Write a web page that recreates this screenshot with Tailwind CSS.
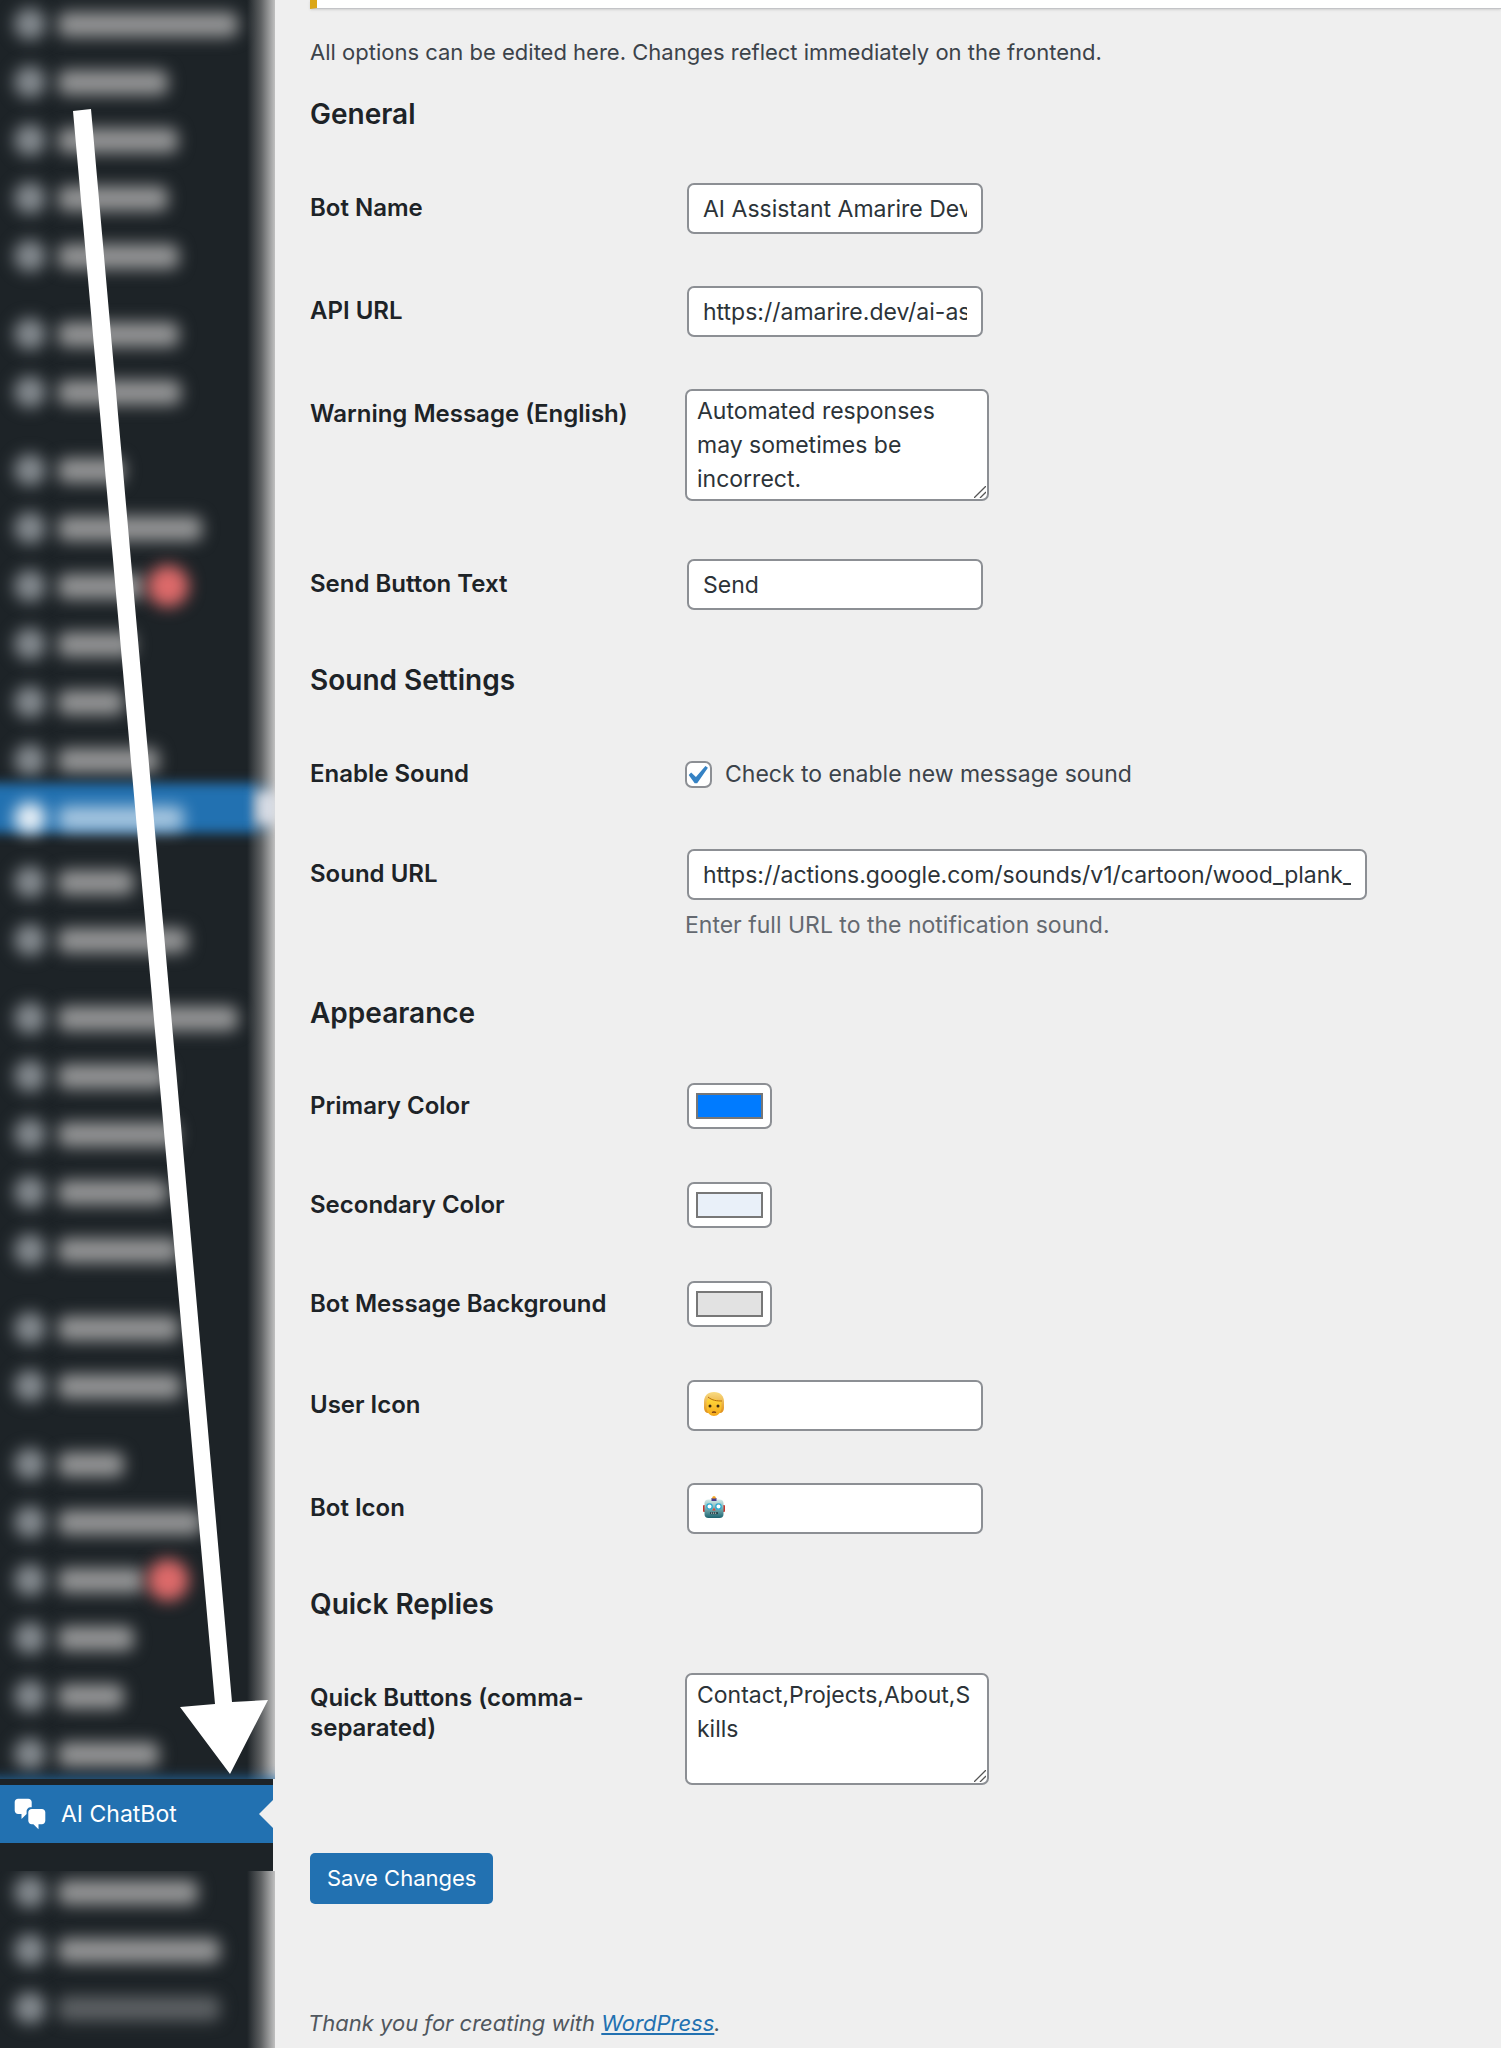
<!DOCTYPE html>
<html lang="en">
<head>
<meta charset="utf-8">
<title>AI ChatBot Settings</title>
<script src="https://cdn.jsdelivr.net/npm/@tailwindcss/browser@4"></script>
</head>
<body class="bg-[#efefef] font-['Inter','Liberation_Sans',sans-serif] text-[22px] text-[#3c434a]">
<div class="relative flex min-h-screen items-stretch">

  <!-- Admin menu -->
  <aside class="relative flex w-[275px] shrink-0 flex-col">
    <div class="relative h-[1779px] overflow-hidden bg-[#1d2327]">
      <ul id="menu-top" aria-hidden="true"></ul>
      <div class="absolute inset-y-0 right-0 w-[28px] bg-linear-to-r from-[#1d2327]/0 via-[#8c8c8c]/60 to-[#c0c0c0]"></div>
      <div class="absolute top-[792px] -right-1 h-8 w-6 bg-[#e8ebf2]/80 blur-[6px]"></div>
      <div class="absolute -inset-x-5 top-[1779px] h-4 bg-[#2271b1] blur-[7px]"></div>
    </div>
    <nav class="relative mr-0.5 bg-[#1d2327] pt-1.5 pb-7">
      <a href="#" class="relative flex h-[58px] items-center bg-[#2271b1] pl-[13px] text-[23px] text-white">
        <svg class="mr-[14px] size-[34px]" viewBox="0 0 20 20" fill="currentColor"><path d="M11 6h-.82C9.07 6 8 7.2 8 8.16V10l-3 3v-3H3c-1.1 0-2-.9-2-2V3c0-1.1.9-2 2-2h6c1.1 0 2 .9 2 2v3zm0 1h6c1.1 0 2 .9 2 2v5c0 1.1-.9 2-2 2h-2v3l-3-3h-1c-1.1 0-2-.9-2-2V9c0-1.1.9-2 2-2z"/></svg>
        AI ChatBot
        <svg class="absolute top-[15px] right-0 h-7 w-3.5" viewBox="0 0 14 28" fill="#efefef"><path d="M14 0v28L0 14z"/></svg>
      </a>
    </nav>
    <div class="relative grow overflow-hidden bg-[#1d2327]">
      <ul id="menu-bottom" aria-hidden="true"></ul>
      <div class="absolute inset-y-0 right-0 w-[28px] bg-linear-to-r from-[#1d2327]/0 via-[#8c8c8c]/60 to-[#c0c0c0]"></div>
    </div>
  </aside>

  <!-- Settings page -->
  <main class="min-w-0 grow pl-[35px]">
    <div class="h-[9px] border-b border-l-[7px] border-b-[#c3c4c7] border-l-[#dba617] bg-white shadow-sm"></div>
    <p class="mt-[27px] leading-[33px]">All options can be edited here. Changes reflect immediately on the frontend.</p>

    <form>
      <h2 class="mt-[29px] mb-[53px] text-[28px] leading-8 font-semibold text-[#1d2327]">General</h2>
      <div class="flex flex-col gap-[52px]">
        <div class="flex items-start">
          <label for="bot-name" class="w-[375px] shrink-0 pt-2.5 text-[24px] leading-[30px] font-semibold text-[#1d2327]">Bot Name</label>
          <input id="bot-name" type="text" value="AI Assistant Amarire Dev" class="ml-0.5 h-[51px] w-[296px] rounded-[7px] border-2 border-[#8c8f94] bg-white px-3.5 text-[23px] text-[#2c3338]">
        </div>
        <div class="flex items-start">
          <label for="api-url" class="w-[375px] shrink-0 pt-2.5 text-[24px] leading-[30px] font-semibold text-[#1d2327]">API URL</label>
          <input id="api-url" type="text" value="https://amarire.dev/ai-assistant" class="ml-0.5 h-[51px] w-[296px] rounded-[7px] border-2 border-[#8c8f94] bg-white px-3.5 text-[23px] text-[#2c3338]">
        </div>
        <div class="flex items-start">
          <label for="warning" class="w-[375px] shrink-0 pt-2.5 text-[24px] leading-[30px] font-semibold text-[#1d2327]">Warning Message (English)</label>
          <div class="relative mb-1.5">
            <textarea id="warning" class="block h-[112px] w-[304px] resize-none overflow-hidden rounded-[7px] border-2 border-[#8c8f94] bg-white px-2.5 py-[3px] text-[23px] leading-[34px] text-[#2c3338]">Automated responses may sometimes be incorrect.</textarea>
            <svg class="absolute right-[3px] bottom-[3px] size-3" viewBox="0 0 12 12" stroke="#555" stroke-width="1.3"><path d="M0 12L12 0M6 12l6-6"/></svg>
          </div>
        </div>
        <div class="flex items-start">
          <label for="send-text" class="w-[375px] shrink-0 pt-2.5 text-[24px] leading-[30px] font-semibold text-[#1d2327]">Send Button Text</label>
          <input id="send-text" type="text" value="Send" class="ml-0.5 h-[51px] w-[296px] rounded-[7px] border-2 border-[#8c8f94] bg-white px-3.5 text-[23px] text-[#2c3338]">
        </div>
      </div>

      <h2 class="mt-[54px] mb-[53px] text-[28px] leading-8 font-semibold text-[#1d2327]">Sound Settings</h2>
      <div class="flex flex-col gap-[52px]">
        <div class="flex min-h-12 items-start">
          <span class="w-[375px] shrink-0 pt-2.5 text-[24px] leading-[30px] font-semibold text-[#1d2327]">Enable Sound</span>
          <label class="flex pt-2.5 text-[23px] leading-[30px]">
            <span class="relative mt-0.5 mr-[13px] size-[27px]">
              <input type="checkbox" checked class="block size-[27px] appearance-none rounded-[7px] border-2 border-[#8c8f94] bg-white">
              <svg class="pointer-events-none absolute -top-1 -left-[7px] size-[37px] max-w-none" viewBox="0 0 20 20" fill="#3582c4"><path d="M14.83 4.89l1.34.94-5.81 8.38H9.02L5.78 9.67l1.34-1.25 2.57 2.4z"/></svg>
            </span>
            Check to enable new message sound
          </label>
        </div>
        <div class="flex items-start">
          <label for="sound-url" class="w-[375px] shrink-0 pt-2.5 text-[24px] leading-[30px] font-semibold text-[#1d2327]">Sound URL</label>
          <div>
            <input id="sound-url" type="text" value="https://actions.google.com/sounds/v1/cartoon/wood_plank_flicks.ogg" class="ml-0.5 block h-[51px] w-[680px] rounded-[7px] border-2 border-[#8c8f94] bg-white px-3.5 text-[23px] text-[#2c3338]">
            <p class="mt-[9px] text-[23px] leading-[33px] text-[#646970]">Enter full URL to the notification sound.</p>
          </div>
        </div>
      </div>

      <h2 class="mt-[55px] mb-[54px] text-[28px] leading-8 font-semibold text-[#1d2327]">Appearance</h2>
      <div class="flex flex-col gap-[52px]">
        <div class="flex min-h-[47px] items-start">
          <label for="primary" class="w-[375px] shrink-0 pt-2 text-[24px] leading-[30px] font-semibold text-[#1d2327]">Primary Color</label>
          <input id="primary" type="color" value="#007bff" class="ml-0.5 h-[46px] w-[85px] appearance-none rounded-[7px] border-2 border-[#8c8f94] bg-white px-[7px] py-2 [&::-webkit-color-swatch]:rounded-none [&::-webkit-color-swatch]:border-2 [&::-webkit-color-swatch]:border-[#777] [&::-webkit-color-swatch-wrapper]:p-0">
        </div>
        <div class="flex min-h-[47px] items-start">
          <label for="secondary" class="w-[375px] shrink-0 pt-2 text-[24px] leading-[30px] font-semibold text-[#1d2327]">Secondary Color</label>
          <input id="secondary" type="color" value="#e9f0f9" class="ml-0.5 h-[46px] w-[85px] appearance-none rounded-[7px] border-2 border-[#8c8f94] bg-white px-[7px] py-2 [&::-webkit-color-swatch]:rounded-none [&::-webkit-color-swatch]:border-2 [&::-webkit-color-swatch]:border-[#777] [&::-webkit-color-swatch-wrapper]:p-0">
        </div>
        <div class="flex min-h-[47px] items-start">
          <label for="bot-bg" class="w-[375px] shrink-0 pt-2 text-[24px] leading-[30px] font-semibold text-[#1d2327]">Bot Message Background</label>
          <input id="bot-bg" type="color" value="#e2e2e2" class="ml-0.5 h-[46px] w-[85px] appearance-none rounded-[7px] border-2 border-[#8c8f94] bg-white px-[7px] py-2 [&::-webkit-color-swatch]:rounded-none [&::-webkit-color-swatch]:border-2 [&::-webkit-color-swatch]:border-[#777] [&::-webkit-color-swatch-wrapper]:p-0">
        </div>
        <div class="flex items-start">
          <label for="user-icon" class="w-[375px] shrink-0 pt-2.5 text-[24px] leading-[30px] font-semibold text-[#1d2327]">User Icon</label>
          <div class="relative ml-0.5">
            <input id="user-icon" type="text" class="block h-[51px] w-[296px] rounded-[7px] border-2 border-[#8c8f94] bg-white px-3.5 text-[23px] text-[#2c3338]">
            <svg class="pointer-events-none absolute top-3 left-4 h-6 w-[22px]" viewBox="0 0 22 24">
              <defs><linearGradient id="face" x1="0" y1="0" x2="0" y2="1"><stop offset="0" stop-color="#ffd93b"/><stop offset="1" stop-color="#f5a81c"/></linearGradient><linearGradient id="hair" x1="0" y1="0" x2="0" y2="1"><stop offset="0" stop-color="#f9dc82"/><stop offset="1" stop-color="#e0901a"/></linearGradient></defs>
              <path d="M11 0C4.500 0 1 4 1 10v6c0 3 2 5 4 5h12c2 0 4-2 4-5v-6C21 4 17.500 0 11 0z" fill="url(#hair)"/>
              <path d="M3.500 10c0-2 1.500-3 3.500-3.500 4 0 8 2 11.500 2v7c0 5-4 8.500-7.500 8.500s-7.500-3.500-7.500-8.500z" fill="url(#face)"/>
              <path d="M5 5c4 3.500 9 4 14 4" fill="none" stroke="#b56a10" stroke-width="1"/>
              <circle cx="7" cy="14" r="1.500" fill="#3b2a12"/><circle cx="15" cy="14" r="1.500" fill="#3b2a12"/>
              <path d="M9 20.500q2-1 4 0" fill="none" stroke="#7a3c10" stroke-width="1.300"/>
            </svg>
          </div>
        </div>
        <div class="flex items-start">
          <label for="bot-icon" class="w-[375px] shrink-0 pt-2.5 text-[24px] leading-[30px] font-semibold text-[#1d2327]">Bot Icon</label>
          <div class="relative ml-0.5">
            <input id="bot-icon" type="text" class="block h-[51px] w-[296px] rounded-[7px] border-2 border-[#8c8f94] bg-white px-3.5 text-[23px] text-[#2c3338]">
            <svg class="pointer-events-none absolute top-3 left-4 h-6 w-[22px]" viewBox="0 0 22 24">
              <defs><linearGradient id="bot" x1="0" y1="0" x2="0" y2="1"><stop offset="0" stop-color="#d5ebe9"/><stop offset=".45" stop-color="#7fb4b8"/><stop offset="1" stop-color="#1d6470"/></linearGradient></defs>
              <rect x="0" y="10" width="3" height="7" rx="1" fill="#c8352b"/><rect x="19" y="10" width="3" height="7" rx="1" fill="#c8352b"/>
              <rect x="1.500" y="4.500" width="19" height="18.500" rx="4" fill="url(#bot)"/>
              <rect x="8.500" y="3" width="5" height="3" fill="#473a8c"/><path d="M9 3.500a2 2.500 0 014 0z" fill="#f5a623"/>
              <circle cx="6.500" cy="11.500" r="2.700" fill="#fff" stroke="#29a8cf" stroke-width="1.300"/><circle cx="15.500" cy="11.500" r="2.700" fill="#fff" stroke="#29a8cf" stroke-width="1.300"/>
              <path d="M11 12.500l1.500 3h-3z" fill="#e8402f"/>
              <rect x="7" y="17" width="8" height="2.200" rx=".8" fill="#24434a"/><path d="M8 18.100h6" stroke="#e5e5e5" stroke-width="1" stroke-dasharray="1.200 .8"/>
            </svg>
          </div>
        </div>
      </div>

      <h2 class="mt-[54px] mb-[53px] text-[28px] leading-8 font-semibold text-[#1d2327]">Quick Replies</h2>
      <div class="flex items-start">
        <label for="quick" class="w-[375px] shrink-0 pt-2.5 pr-12 text-[24px] leading-[30px] font-semibold text-[#1d2327]">Quick Buttons (comma-separated)</label>
        <div class="relative mb-1.5">
          <textarea id="quick" class="block h-[112px] w-[304px] resize-none overflow-hidden rounded-[7px] border-2 border-[#8c8f94] bg-white px-2.5 py-[3px] text-[23px] leading-[34px] break-all text-[#2c3338]">Contact,Projects,About,Skills</textarea>
          <svg class="absolute right-[3px] bottom-[3px] size-3" viewBox="0 0 12 12" stroke="#555" stroke-width="1.3"><path d="M0 12L12 0M6 12l6-6"/></svg>
        </div>
      </div>
      <button type="button" class="mt-[62px] block h-[51px] rounded-[5px] bg-[#2271b1] px-[17px] text-[22px] text-white">Save Changes</button>
    </form>

    <footer class="mt-[104px] -ml-0.5 pb-2 leading-[30px] text-[#50575e] italic">Thank you for creating with <a href="#" class="text-[#2271b1] underline">WordPress</a>.</footer>
  </main>

  <!-- Pointer to the plugin's menu item -->
  <svg class="pointer-events-none absolute top-0 left-0 h-[1780px] w-[275px]" viewBox="0 0 275 1780" fill="#fff"><path d="M73 111l18-2 141 1593 36-2-38 74-50-67 35-3z"/></svg>
</div>

<script>
  // Obscured menu entries: label width, plus flags for group gaps, badge, active row and dim text.
  const top1 = [
    { w: 180 }, { w: 110 }, { w: 120 }, { w: 110 }, { w: 121 },
    { w: 121, gap: true }, { w: 123 },
    { w: 66, gap: true }, { w: 144 }, { w: 86, badge: true }, { w: 76 }, { w: 66 }, { w: 101 },
    { w: 126, active: true }, { w: 76, step: true }, { w: 130 }
  ];
  const top2 = [
    { w: 180, gap: true }, { w: 110 }, { w: 120 }, { w: 110 }, { w: 121 },
    { w: 121, gap: true }, { w: 123 },
    { w: 66, gap: true }, { w: 144 }, { w: 86, badge: true }, { w: 76 }, { w: 66 }, { w: 101 }
  ];
  const bottom = [{ w: 140 }, { w: 162 }, { w: 162, dim: true }];
  const row = r => `
    <li class="relative flex h-[58px] items-center ${r.gap ? 'mt-5' : r.step ? 'mt-1.5' : ''}">
      ${r.active ? '<span class="absolute -inset-x-5 -top-1.5 h-[50px] bg-[#2271b1] blur-[6px]"></span>' : ''}
      <span class="relative ml-[14px] size-[32px] rounded-full blur-[8px] ${r.active ? 'bg-white/90' : 'bg-[#858b90]'}"></span>
      <span class="relative ml-3 h-[25px] rounded-lg blur-[8px] ${r.active ? 'bg-white/60' : r.dim ? 'bg-[#5c6063]' : 'bg-[#949596]'}" style="width:${r.w}px"></span>
      ${r.badge ? '<span class="absolute left-[147px] size-[42px] rounded-full bg-[#dd6a6a] blur-[8px]"></span>' : ''}
    </li>`;
  document.getElementById('menu-top').innerHTML = '<li class="-mt-[5px]"></li>' + [...top1, ...top2].map(row).join('');
  document.getElementById('menu-bottom').innerHTML = '<li class="-mt-2"></li>' + bottom.map(row).join('');
</script>
</body>
</html>
